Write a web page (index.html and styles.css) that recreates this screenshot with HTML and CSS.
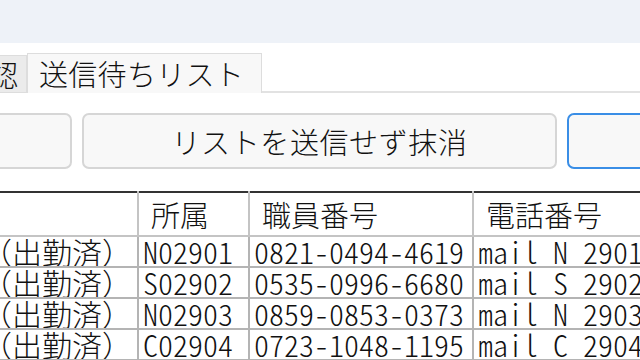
FILE: index.html
```html
<!DOCTYPE html>
<html lang="ja">
<head>
    <meta charset="UTF-8">
    <meta name="viewport" content="width=device-width, initial-scale=1.0">
    <title>送信待ちリスト</title>
    <link rel="stylesheet" href="styles.css">
</head>
<body>

<div class="topbar"></div>

<div class="tabs">
    <div class="tab">出勤確認</div>
    <div class="tab active">送信待ちリスト</div>
    <div class="tab-rest"></div>
</div>

<div class="actions">
    <button type="button" class="btn btn-side"></button>
    <button type="button" class="btn btn-main">リストを送信せず抹消</button>
    <button type="button" class="btn btn-focus"></button>
</div>

<table class="staff">
    <colgroup>
        <col class="c-name">
        <col class="c-dept">
        <col class="c-id">
        <col class="c-tel">
    </colgroup>
    <thead>
        <tr>
            <th></th>
            <th>所属</th>
            <th>職員番号</th>
            <th>電話番号</th>
        </tr>
    </thead>
    <tbody>
        <tr>
            <td class="name">（出勤済）</td>
            <td>N02901</td>
            <td>0821-0494-4619</td>
            <td>mail N 2901</td>
        </tr>
        <tr>
            <td class="name">（出勤済）</td>
            <td>S02902</td>
            <td>0535-0996-6680</td>
            <td>mail S 2902</td>
        </tr>
        <tr>
            <td class="name">（出勤済）</td>
            <td>N02903</td>
            <td>0859-0853-0373</td>
            <td>mail N 2903</td>
        </tr>
        <tr>
            <td class="name">（出勤済）</td>
            <td>C02904</td>
            <td>0723-1048-1195</td>
            <td>mail C 2904</td>
        </tr>
    </tbody>
</table>

</body>
</html>
```

FILE: styles.css
```css
body {
    margin: 0;
    overflow: hidden;
    background-color: #ffffff;
    color: #111111;
    font-family: "Noto Sans CJK JP", sans-serif;
    font-weight: 300;
}
.topbar {
    height: 43px;
    background-color: #eef2f8;
}

.tabs {
    display: flex;
    align-items: flex-end;
    margin-top: 10px;
    margin-left: -123px;
}
.tab {
    box-sizing: border-box;
    height: 38px;
    width: 150px;
    padding-right: 8px;
    text-align: right;
    white-space: nowrap;
    font-size: 29px;
    line-height: 36px;
    background-color: #ebebeb;
    border: 1px solid #dddddd;
}
.tab.active {
    width: auto;
    height: 40px;
    padding: 0 17px 0 11px;
    text-align: left;
    line-height: 38px;
    letter-spacing: 0.3px;
    background-color: #f8f8f8;
    border-bottom: none;
}
.tab-rest {
    flex: 1;
    border-bottom: 2px solid #e2e2e2;
}

.actions {
    display: flex;
    gap: 10px;
    margin-top: 20px;
    margin-left: -128px;
}
.btn {
    box-sizing: border-box;
    height: 56px;
    flex: none;
    border: 2px solid #d6d6d6;
    border-radius: 7px;
    background-color: #f8f8f8;
    color: #111111;
    font-family: "Noto Sans CJK JP", sans-serif;
    font-weight: 300;
    font-size: 29px;
    letter-spacing: 0.6px;
    padding: 0;
}
.btn-side {
    width: 200px;
}
.btn-main {
    width: 475px;
}
.btn-focus {
    width: 200px;
    border-color: #3a8ee6;
}

.staff {
    table-layout: fixed;
    width: 796px;
    margin-top: 22px;
    margin-left: -24px;
    border-collapse: collapse;
    font-size: 30px;
    font-feature-settings: "hwid";
}
.c-name { width: 161px; }
.c-dept { width: 111px; }
.c-id { width: 224px; }
.c-tel { width: 300px; }

.staff th {
    height: 37px;
    padding: 0 0 0 12px;
    text-align: left;
    font-weight: 300;
    font-size: 29px;
    font-feature-settings: normal;
    border: 2px solid #c4c4c4;
    border-top: 2px solid #333333;
}
.staff td {
    padding: 0 4px;
    line-height: 29px;
    white-space: nowrap;
    overflow: hidden;
    border: 2px solid #b4b4b4;
}
.staff td.name {
    font-feature-settings: normal;
}
```
